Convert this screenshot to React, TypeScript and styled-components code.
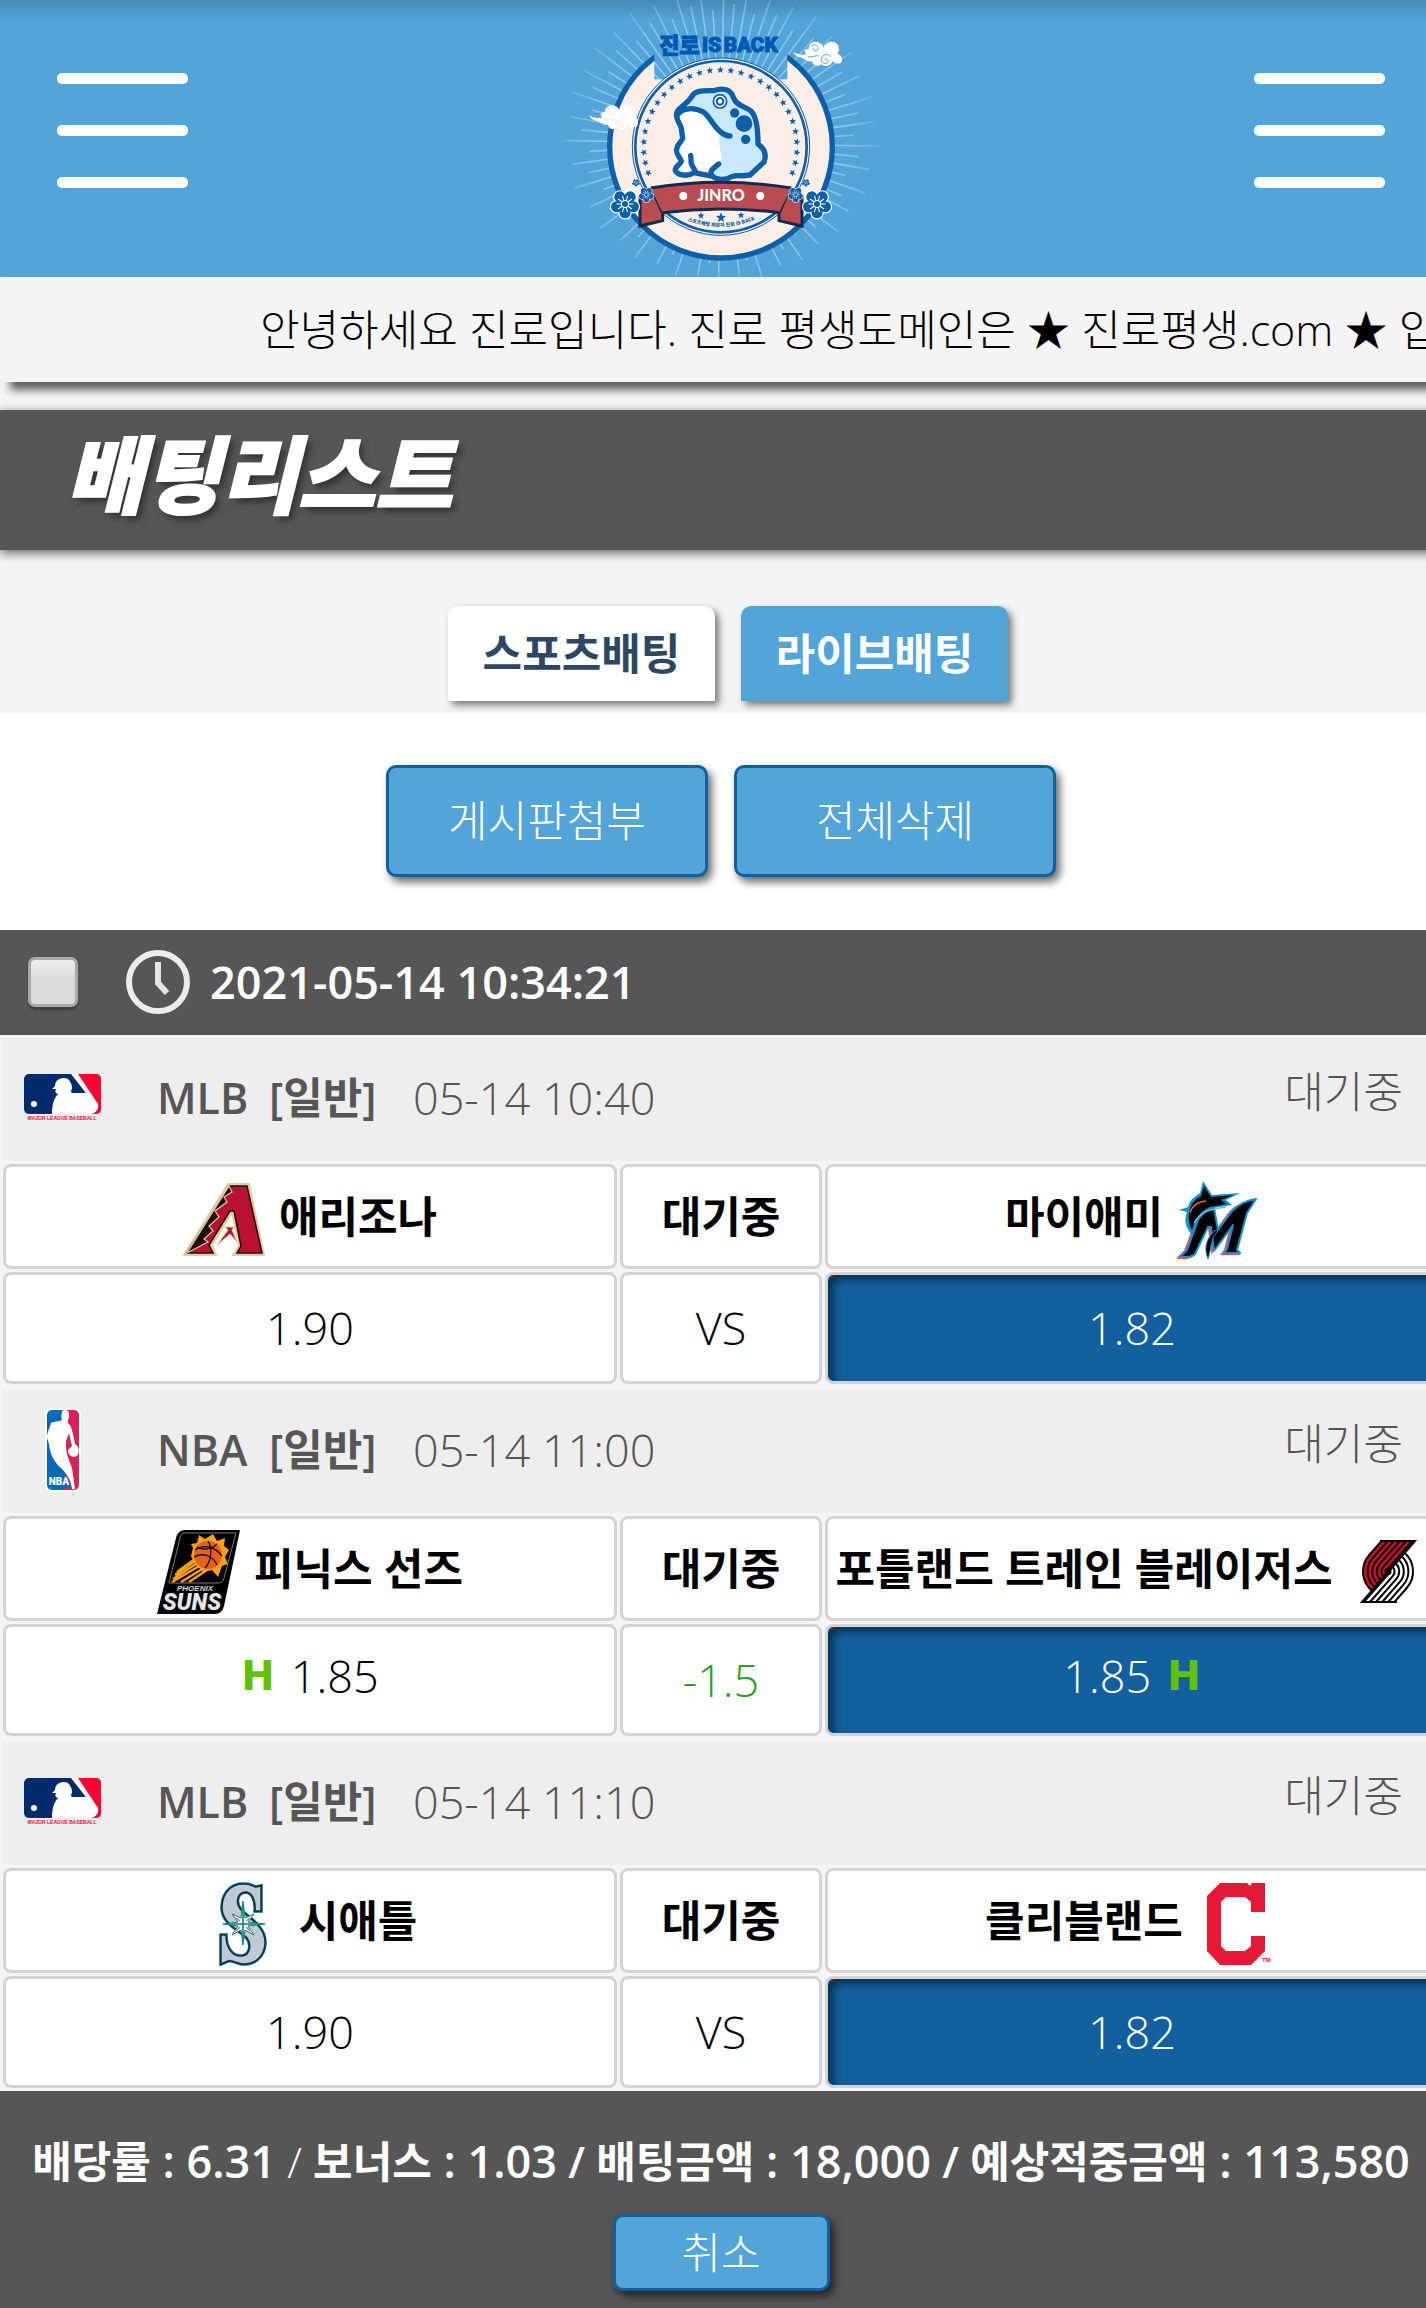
import React from "react";
import styled, { createGlobalStyle, css } from "styled-components";

const color = {
  sky: "#53a4d8",
  deep: "#13609e",
  dark: "#565656",
  pale: "#f4f4f4",
  row: "#eeeeee",
  line: "#d4d4d4",
  navy: "#2d4662",
  green: "#2a9f26",
  handicap: "#63bf0b",
};

const GlobalStyle = createGlobalStyle`
  *, *::before, *::after { box-sizing: border-box; }
  body {
    margin: 0;
    overflow-x: hidden;
    background: #fff;
    color: #000;
    font-family: "Open Sans", "DejaVu Sans", "Noto Sans CJK KR", sans-serif;
    font-size: 43px;
    font-weight: 300;
    line-height: 56px;
  }
  button, input { font: inherit; margin: 0; }
  button { cursor: pointer; }
`;

const Page = styled.div`
  width: calc(100% + 16px);
`;

/* ---------- header ---------- */

const Header = styled.header`
  display: flex;
  justify-content: space-between;
  align-items: flex-start;
  padding: 0 57px;
  background: linear-gradient(rgba(0, 0, 0, 0.16), rgba(0, 0, 0, 0) 20px) ${color.sky};
`;

const MenuButton = styled.button`
  display: flex;
  flex-direction: column;
  gap: 41px;
  width: 131px;
  margin-top: 73px;
  padding: 0;
  border: 0;
  background: none;
`;

const MenuBar = styled.span`
  height: 11px;
  border-radius: 5px;
  background: #fff;
`;

const LogoLink = styled.a`
  display: block;
  height: 277px;
`;

const Notice = styled.p`
  position: relative;
  margin: 0;
  padding: 25px 0 24px 260px;
  white-space: nowrap;
  background: ${color.pale};
  box-shadow: 10px 8px 8px rgba(0, 0, 0, 0.6);
`;

const NoticeText = styled.span`
  display: block;
  overflow: hidden;
`;

/* ---------- title and tabs ---------- */

const Listing = styled.section`
  padding-top: 28px;
  background: ${color.pale};
`;

const TitleBar = styled.div`
  padding: 20px 66px 30px;
  background: ${color.dark};
  box-shadow: 0 3px 10px rgba(0, 0, 0, 0.6);
`;

const Title = styled.h1`
  margin: 0;
  color: #fff;
  font-size: 84px;
  line-height: 90px;
  font-weight: 900;
  font-style: italic;
  -webkit-text-stroke: 2px #fff;
  text-shadow: 4px 5px 7px rgba(0, 0, 0, 0.45);
`;

const Tabs = styled.nav`
  display: flex;
  justify-content: center;
  gap: 26px;
  padding: 56px 0 12px 14px;
`;

const Tab = styled.button<{ $active?: boolean }>`
  width: 267px;
  height: 95px;
  padding: 0;
  border: 0;
  border-radius: 10px 10px 0 0;
  background: ${(p) => (p.$active ? color.sky : "#fff")};
  color: ${(p) => (p.$active ? "#fff" : color.navy)};
  font-weight: 600;
  box-shadow: 4px 4px 7px rgba(0, 0, 0, 0.5);
`;

const Actions = styled.div`
  display: flex;
  justify-content: center;
  gap: 26px;
  padding: 52px 0 53px;
  background: #fff;
`;

const ActionButton = styled.button<{ $small?: boolean }>`
  width: ${(p) => (p.$small ? 217 : 322)}px;
  height: ${(p) => (p.$small ? 77 : 112)}px;
  padding: 0;
  border: 3px solid ${color.deep};
  border-radius: 10px;
  background: ${color.sky};
  color: #fff;
  box-shadow: 4px 5px 9px rgba(0, 0, 0, 0.6);
`;

/* ---------- bet slip ---------- */

const SlipHead = styled.label`
  display: flex;
  align-items: center;
  height: 105px;
  padding: 0 28px 2px;
  background: ${color.dark};
  color: #fff;
  font-size: 45px;
  font-weight: 600;
`;

const Check = styled.input`
  appearance: none;
  width: 50px;
  height: 50px;
  margin-right: 47px;
  border: 3px solid #a9a9a9;
  border-radius: 7px;
  background: linear-gradient(#eeeeee, #dcdcdc 40%);
  box-shadow: 0 3px 2px rgba(0, 0, 0, 0.25);
`;

const Clock = styled.svg`
  width: 66px;
  height: 66px;
  margin-right: 19px;
`;

const MatchTable = styled.table`
  width: 100%;
  table-layout: fixed;
  border-collapse: separate;
  border-spacing: 3px;
  background: ${color.pale};
  text-align: center;
`;

const MiddleCol = styled.col`
  width: 202px;
`;

const LeagueCell = styled.th`
  height: 123px;
  padding: 0 0 4px;
  background: ${color.row};
  color: ${color.dark};
  font-weight: 300;
`;

const LeagueRow = styled.div`
  display: grid;
  grid-template-columns: 134px 112px 144px 1fr auto;
  align-items: center;
  padding: 0 36px 0 20px;
  text-align: left;
`;

const LeagueLogo = styled.div`
  display: flex;
  justify-content: center;
  width: 80px;
`;

const LeagueName = styled.b`
  font-weight: 600;
`;

const Kickoff = styled.time`
  font-size: 45px;
`;

const Status = styled.span`
  margin-bottom: 12px;
`;

const Cell = styled.td<{ $kind: "team" | "odds"; $picked?: boolean }>`
  height: ${(p) => (p.$kind === "team" ? 105 : 112)}px;
  padding: 0;
  border: 3px solid ${color.line};
  border-radius: 8px;
  background: #fff;
  ${(p) =>
    p.$kind === "team"
      ? css`
          font-weight: 600;
        `
      : css`
          font-size: 45px;
        `}
  ${(p) =>
    p.$picked &&
    css`
      background: ${color.deep};
      color: #fff;
      box-shadow: inset 5px 5px 8px rgba(0, 0, 0, 0.5);
    `}
`;

const Team = styled.div`
  display: flex;
  justify-content: center;
  align-items: center;
  gap: 14px;
  white-space: nowrap;

  svg {
    flex: none;
    margin-top: 6px;
  }
`;

const Odds = styled.div<{ $handicap?: boolean }>`
  display: flex;
  justify-content: center;
  align-items: center;
  gap: 16px;
  padding-bottom: ${(p) => (p.$handicap ? 8 : 0)}px;
`;

const HandicapMark = styled.span`
  color: ${color.handicap};
  font-family: "DejaVu Sans", sans-serif;
  font-size: 40px;
  font-weight: 700;
`;

const Line = styled.span`
  color: ${color.green};
`;

/* ---------- footer ---------- */

const Summary = styled.footer`
  display: flex;
  flex-direction: column;
  align-items: center;
  gap: 24px;
  padding: 42px 0 18px;
  background: ${color.dark};
  color: #fff;
`;

const Totals = styled.p`
  margin: 0;
  font-weight: 600;
  white-space: nowrap;
`;

const Amount = styled.span`
  font-size: 45px;
`;

const Thin = styled.span`
  font-weight: 300;
`;

/* ---------- brand logo ---------- */

const polar = (cx: number, cy: number, r: number, deg: number) => {
  const a = (deg * Math.PI) / 180;
  return [cx + r * Math.cos(a), cy + r * Math.sin(a)];
};

const starPoints = (cx: number, cy: number, r: number, turn = -90) =>
  Array.from({ length: 10 }, (_, i) =>
    polar(cx, cy, i % 2 ? r * 0.42 : r, turn + i * 36).join(",")
  ).join(" ");

const Flower = ({ x, y, r }: { x: number; y: number; r: number }) => (
  <g>
    {[0, 1].map((layer) =>
      Array.from({ length: 5 }, (_, i) => {
        const [px, py] = polar(x, y, r * 0.6, 90 + i * 72);
        return (
          <circle
            key={`${layer}${i}`}
            cx={px}
            cy={py}
            r={layer ? r * 0.38 : r * 0.46}
            fill={layer ? "#0e5fa8" : "#fff"}
          />
        );
      })
    )}
    <circle cx={x} cy={y} r={r * 0.5} fill="#0e5fa8" />
    {Array.from({ length: 10 }, (_, i) => {
      const [x1, y1] = polar(x, y, r * 0.26, i * 36);
      const [x2, y2] = polar(x, y, r * 0.58, i * 36);
      return <line key={i} x1={x1} y1={y1} x2={x2} y2={y2} stroke="#fff" strokeWidth={r * 0.07} />;
    })}
    <circle cx={x} cy={y} r={r * 0.24} fill="none" stroke="#fff" strokeWidth={r * 0.07} />
  </g>
);

const Cloud = ({ x, y, line }: { x: number; y: number; line: string }) => (
  <g transform={`translate(${x} ${y})`}>
    <path
      d="M0 30C8 40 24 42 40 38C30 32 34 22 46 22C46 8 62 -4 78 4C88 8 90 16 90 20C96 0 124 -6 134 12C140 22 136 34 132 38C146 40 150 56 142 66C134 68 122 66 118 60C112 76 92 78 84 68C78 76 58 76 56 60C40 62 30 50 20 48C10 46 2 40 0 30Z"
      fill="#fff"
    />
    <path
      d="M54 14C66 4 78 16 72 26C66 32 56 26 62 20M44 46C60 50 72 38 78 46M112 46C104 34 86 40 84 54C84 66 98 70 104 62C108 54 98 50 94 56"
      fill="none"
      stroke={line}
      strokeWidth="3"
    />
  </g>
);

const BrandLogo = () => (
  <svg width="330" height="277" viewBox="-12 0 990 831" role="img" aria-label="진로 IS BACK">
    <defs>
      <mask id="ringMask">
        <rect x="-12" y="0" width="990" height="831" fill="#fff" />
        <rect x="283" y="0" width="399" height="238" fill="#000" />
      </mask>
      <radialGradient id="rayFade" gradientUnits="userSpaceOnUse" cx="483" cy="430" r="490">
        <stop offset="0.4" stopColor="#fff" stopOpacity="0.5" />
        <stop offset="0.75" stopColor="#fff" stopOpacity="0.35" />
        <stop offset="1" stopColor="#fff" stopOpacity="0.1" />
      </radialGradient>
      <path id="sloganArc" d="M345 645Q483 718 622 641" />
    </defs>
    <g fill="url(#rayFade)">
      {Array.from({ length: 80 }, (_, i) => {
        const deg = i * 4.5 + 1;
        const down = Math.max(0, Math.sin((deg * Math.PI) / 180));
        const r = [476, 420, 462, 400][i % 4] - down * 60;
        const a = polar(483, 430, 200, deg - 0.5);
        const b = polar(483, 430, 200, deg + 0.5);
        const c = polar(483, 430, r, deg + 0.35);
        const d = polar(483, 430, r, deg - 0.35);
        return <polygon key={i} points={[a, b, c, d].map((p) => p.join(",")).join(" ")} />;
      })}
    </g>
    <circle cx="483" cy="440" r="334" fill="#fbeee6" stroke="#0e5fa8" strokeWidth="16" mask="url(#ringMask)" />
    <circle cx="483" cy="440" r="266" fill="#fbeee6" stroke="#0e5fa8" strokeWidth="3" />
    <circle cx="483" cy="440" r="257" fill="none" stroke="#0e5fa8" strokeWidth="8" />
    {Array.from({ length: 29 }, (_, i) => {
      const deg = -200 + i * (220 / 28);
      const [x, y] = polar(481, 440, 230, deg);
      return <polygon key={i} points={starPoints(x, y, 11, deg)} fill="#0a5cb4" />;
    })}

    <g fill="#0058b5" fontWeight="900" fontSize="62" fontFamily="Roboto, 'Noto Sans CJK KR', sans-serif" stroke="#0058b5" strokeWidth="3">
      <text x="298" y="158" fontSize="66">
        진로
      </text>
      <text x="426" y="156">
        IS
      </text>
      <text x="491" y="156">
        BACK
      </text>
    </g>

    <g strokeLinejoin="round" strokeLinecap="round">
      <path
        d="M350 350C345 325 375 320 395 290C405 270 430 272 460 272C490 262 512 268 520 292C530 320 560 320 575 335C592 355 594 400 594 432C620 450 618 470 612 486L570 525C540 530 530 524 515 530C495 540 480 540 460 532L440 522L402 522C385 530 355 528 348 512C346 498 362 490 362 484C360 470 348 462 350 448C352 430 364 425 366 415L364 385Z"
        fill="#c8e9fb"
      />
      <path
        d="M356 352C370 330 400 328 425 340C445 356 455 378 480 396C474 420 480 450 486 478C470 490 460 505 456 522L402 520C380 528 352 524 350 508C352 496 366 492 366 482C360 468 348 460 352 446C360 430 370 424 368 412L364 384Z"
        fill="#fff"
      />
      <path
        d="M350 350C345 325 375 320 395 290C405 270 430 272 460 272C490 262 512 268 520 292C530 320 560 320 575 335C592 355 594 400 594 432C620 450 618 470 612 486L570 525C540 530 530 524 515 530C495 542 470 540 456 528C446 512 462 504 476 492M456 528C440 526 425 522 402 518C385 530 355 528 346 512C344 498 362 494 364 484C360 470 346 462 350 448C352 430 366 425 368 415L364 385C360 370 352 365 350 350C360 326 395 318 430 336C450 350 460 380 482 396C492 405 500 408 510 408M392 466L394 492L406 514"
        fill="none"
        stroke="#0e5fa8"
        strokeWidth="16"
      />
    </g>
    <circle cx="480" cy="304" r="20" fill="#fff" stroke="#0e5fa8" strokeWidth="5" />
    <circle cx="480" cy="304" r="10" fill="#fff" stroke="#0e5fa8" strokeWidth="6" />
    <circle cx="524" cy="339" r="14" fill="#0e5fa8" />
    <circle cx="552" cy="371" r="25" fill="#0e5fa8" />
    <circle cx="557" cy="418" r="14" fill="#0e5fa8" />

    <path d="M240 590L275 566L308 640V662L240 678Z" fill="#b94c52" stroke="#15294a" strokeWidth="9" />
    <path d="M726 590L690 566L657 640V662L726 678Z" fill="#b94c52" stroke="#15294a" strokeWidth="9" />
    <path d="M272 564Q483 530 694 564L657 638Q483 616 308 638Z" fill="#b94c52" />
    <path d="M272 564Q483 530 694 564M308 638Q483 616 657 638" fill="none" stroke="#15294a" strokeWidth="9" />
    <circle cx="370" cy="588" r="12" fill="#fff" />
    <circle cx="601" cy="588" r="12" fill="#fff" />
    <text x="483" y="602" textAnchor="middle" fontSize="48" fontWeight="900" fontFamily="Lato, sans-serif" fill="#fff">
      JINRO
    </text>
    <polygon points={starPoints(423, 647, 11)} fill="#0a5cb4" />
    <polygon points={starPoints(483, 653, 16)} fill="#0a5cb4" />
    <polygon points={starPoints(543, 646, 11)} fill="#0a5cb4" />
    <text fontSize="15" fontWeight="900" fontFamily="'Noto Sans CJK KR', sans-serif" fill="#0e5fa8">
      <textPath href="#sloganArc" startOffset="50%" textAnchor="middle">
        스포츠배팅 최강자 진로 IS BACK
      </textPath>
    </text>

    <Flower x={195} y={612} r={44} />
    <Flower x={771} y={612} r={44} />
    <Flower x={259} y={584} r={23} />
    <Flower x={707} y={584} r={23} />
    <Flower x={228} y={548} r={12} />
    <Flower x={738} y={548} r={12} />
    <Cloud x={700} y={124} line={color.sky} />
    <Cloud x={88} y={314} line="#fbe3d6" />
  </svg>
);

/* ---------- league and team logos ---------- */

const MlbLogo = () => (
  <svg width="78" height="48" viewBox="0 0 78 48" role="img" aria-label="MLB">
    <rect width="77" height="40" rx="5" fill="#002b6b" />
    <path d="M52 0H72A5 5 0 0 1 77 5V35A5 5 0 0 1 72 40H60V10Z" fill="#fb0633" />
    <path
      d="M47 0H54L74 30C75 35 72 39 67 40H28C28 33 29 25 34 20C31 19 31 17 32 15L28 15L31 12C31 6 36 4 40 4C45 4 48 9 48 14C48 16 46 17 48 19H62L58 14Z"
      fill="#fff"
    />
    <circle cx="10" cy="30" r="3" fill="#fff" />
    <text x="38" y="46" textAnchor="middle" fontSize="5" fontWeight="700" fontFamily="'Liberation Sans', sans-serif" fill="#fb0633">
      MAJOR LEAGUE BASEBALL
    </text>
  </svg>
);

const NbaLogo = () => (
  <svg width="36" height="84" viewBox="0 0 36 84" role="img" aria-label="NBA">
    <rect width="36" height="84" rx="6" fill="#fff" />
    <path d="M7 2H19V82H7A5 5 0 0 1 2 77V7A5 5 0 0 1 7 2Z" fill="#0a6ab8" />
    <path d="M19 2H29A5 5 0 0 1 34 7V77A5 5 0 0 1 29 82H19Z" fill="#d92157" />
    <path d="M17 60L28 80H17Z" fill="#0a6ab8" />
    <path
      d="M18 2C22 1 25 4 24 8C24 11 22 13 23 15C26 17 27 22 28 26L30 36C34 38 35 44 32 48C28 50 23 48 23 42L27 38L24 25L21 33C20 44 24 52 27 60L30 81H27C26 72 22 66 16 60C9 54 5 46 4 36L2 30C2 24 5 20 6 15C9 13 14 14 17 12C16 9 16 5 18 2Z"
      fill="#fff"
    />
    <text x="14" y="77" textAnchor="middle" fontSize="10" fontWeight="900" fontFamily="Roboto, sans-serif" fill="#fff">
      NBA
    </text>
  </svg>
);

const ArizonaLogo = () => (
  <svg width="82" height="84" viewBox="0 -6 82 84" aria-hidden="true">
    <path d="M45 0H66L81 71H50L56 62L49 28L29 61L33 71H1Z" fill="#e0cda2" stroke="#e0cda2" strokeWidth="2" />
    <path d="M47 2H64L79 69H54L58 62L51 27H47L26 61L30 69H4Z" fill="#ba1031" stroke="#200c0d" strokeWidth="1.5" />
    <path d="M46 2L49 8L41 13L44 18L32 27L36 33L26 42L30 47L21 55L25 58L4 69Z" fill="#200c0d" stroke="#e0cda2" strokeWidth="1.2" />
    <path d="M42 43H51L49 46L54 58L47 50L34 61L45 46Z" fill="#ba1031" stroke="#e0cda2" strokeWidth="1" />
  </svg>
);

const MarlinsLogo = () => {
  const m =
    "M2 76L9 69L20 39Q26 29 36 27L40 49L54 30Q64 20 78 18L69 32L59 69L62 72H46L49 68L55 44L36 70L33 46H30L17 73Q14 76 10 76Z";
  return (
    <svg width="82" height="84" viewBox="-1 -3 82 84" aria-hidden="true">
      <path d={m} fill="#ef5360" stroke="#ef5360" strokeWidth="2" transform="translate(-2 1)" />
      <path
        d="M25 0L34 14L62 12L48 19L54 24L36 27C24 30 18 40 14 54C7 46 6 38 9 31L1 29L10 26C12 18 18 15 22 12Z"
        fill="#0a95cf"
      />
      <path
        d="M26 5L33 16L56 14L43 19L49 23L32 26C22 30 17 38 14 49C10 42 10 34 12 28C14 21 18 18 23 15Z"
        fill="#000"
      />
      <path d={m} fill="#000" stroke="#0a95cf" strokeWidth="2" strokeLinejoin="round" />
      <path d="M12 32C14 24 20 21 28 20" fill="none" stroke="#ef5360" strokeWidth="1.5" />
      <path d="M16 42C22 31 32 28 48 26" fill="none" stroke="#8fb4c4" strokeWidth="1.5" />
      <path d="M38 49C29 56 25 66 30 78C34 66 32 58 40 50Z" fill="#000" stroke="#0a95cf" strokeWidth="1" />
    </svg>
  );
};

const SunsLogo = () => (
  <svg width="83" height="84" viewBox="0 0 83 84" aria-hidden="true">
    <path d="M28 0H83L67 76Q65 84 58 84H0L19 8Q21 0 28 0Z" fill="#000" />
    <path d="M28 3H79L67 48Q66 53 61 53H12L23 8Q24 3 28 3Z" fill="none" stroke="#77797d" strokeWidth="1" />
    <g stroke="#f9a01b" strokeWidth="2.4">
      <path d="M42 26L20 42M41 29L18 45M42 32L16 49M44 35L15 52M47 38L24 52M50 40L32 52" />
    </g>
    <polygon
      points="42,5 48,9 56,4 60,11 68,8 67,16 72,20 68,27 71,34 65,36 61,47 55,40 46,42 38,34 34,26 36,18 34,14 40,13"
      fill="#f9a01b"
    />
    <circle cx="51" cy="25" r="14" fill="#e56020" />
    <path d="M51 11C56 18 54 32 48 38M38 20C46 14 58 16 65 26M37 27C46 22 56 26 60 35M60 14C54 20 44 20 40 17" fill="none" stroke="#200c0d" strokeWidth="1.3" />
    <text x="38" y="61" textAnchor="middle" fontSize="8" fontWeight="700" fontStyle="italic" fontFamily="'Liberation Sans', sans-serif" fill="#d6d8db">
      PHOENIX
    </text>
    <text x="35" y="80" textAnchor="middle" fontSize="23" fontWeight="900" fontStyle="italic" fontFamily="Roboto, sans-serif" fill="#e4e5e7">
      SUNS
    </text>
  </svg>
);

/* Half of the pinwheel: parallel stripes that bend round the hub. */
const pinwheelStripe = (r: number) => {
  const cx = 26;
  const cy = 30.5;
  const tx = cx - 0.75 * r;
  const ty = cy - 0.66 * r;
  const topX = tx + (0.66 * ty) / 0.75;
  return `M${topX} 0L${tx} ${ty}A${r} ${r} 0 0 0 ${cx - 0.64 * r} ${cy + 0.77 * r}`;
};

const BlazersLogo = () => {
  const stripes = [25, 20.4, 15.8, 11.2, 6.6, 2].map(pinwheelStripe).join("");
  return (
    <svg width="82" height="84" viewBox="-15 -11 82 84" aria-hidden="true">
      <path d={`${pinwheelStripe(25)}L26 30.5L52 0Z`} fill="#c8102e" />
      <g fill="none" stroke="#000" strokeWidth="2">
        <path d={stripes} />
        <path d={stripes} transform="rotate(180 26 30.5)" />
        <path d="M18 0H53L27 30M35 61H0L26 31" />
      </g>
      <circle cx="26" cy="30.5" r="3.5" fill="#000" />
    </svg>
  );
};

const MarinersLogo = () => {
  const s =
    "M41 3V28H35C36 17 32 9 25 9C17 10 15 20 21 27C30 36 46 44 45 61C44 74 34 82 22 81C16 80 12 77 8 78L1 81V52H6C6 66 13 74 22 73C30 72 32 62 27 55C18 46 1 40 2 23C3 8 13 0 25 1C31 1 34 4 36 4Z";
  return (
    <svg width="82" height="84" viewBox="-17 -1 82 84" aria-hidden="true">
      <path d={s} fill="#c1c9d2" stroke="#00685e" strokeWidth="3.5" />
      <path d={s} fill="#c1c9d2" stroke="#0c2c56" strokeWidth="1.5" />
      <polygon points="23,18 25,35 34,31 28,39 45,41 28,43 34,52 25,47 23,62 21,47 12,52 18,43 3,41 18,39 12,31 21,35" fill="#fff" stroke="#0a8078" strokeWidth="1" />
      <path d="M16 35L20 38M30 35L26 38M16 48L20 44M30 48L26 44" stroke="#e46a76" strokeWidth="1.5" />
      <path d="M23 22V58M6 41H42" stroke="#0a8078" strokeWidth="1.6" />
    </svg>
  );
};

const ClevelandLogo = () => (
  <svg width="82" height="84" viewBox="-10 -1 82 84" aria-hidden="true">
    <path
      d="M0 13L13 0H40L43 3L45 0H58V29H44V19L38 14H19L14 19V63L19 68H38L44 63V53H58V68L44 82H13L0 68Z"
      fill="#e51937"
    />
    <text x="55" y="79" fontSize="6" fontWeight="700" fontFamily="'Liberation Sans', sans-serif" fill="#e51937">
      TM
    </text>
  </svg>
);

/* ---------- data ---------- */

type Match = {
  id: string;
  league: "MLB" | "NBA";
  time: string;
  home: string;
  away: string;
  homeLogo: React.ReactNode;
  awayLogo: React.ReactNode;
  homeOdds: string;
  awayOdds: string;
  line?: string;
};

const matches: Match[] = [
  {
    id: "ari-mia",
    league: "MLB",
    time: "05-14 10:40",
    home: "애리조나",
    away: "마이애미",
    homeLogo: <ArizonaLogo />,
    awayLogo: <MarlinsLogo />,
    homeOdds: "1.90",
    awayOdds: "1.82",
  },
  {
    id: "phx-por",
    league: "NBA",
    time: "05-14 11:00",
    home: "피닉스 선즈",
    away: "포틀랜드 트레인 블레이저스",
    homeLogo: <SunsLogo />,
    awayLogo: <BlazersLogo />,
    homeOdds: "1.85",
    awayOdds: "1.85",
    line: "-1.5",
  },
  {
    id: "sea-cle",
    league: "MLB",
    time: "05-14 11:10",
    home: "시애틀",
    away: "클리블랜드",
    homeLogo: <MarinersLogo />,
    awayLogo: <ClevelandLogo />,
    homeOdds: "1.90",
    awayOdds: "1.82",
  },
];

const totals = [
  { label: "배당률", value: "6.31" },
  { label: "보너스", value: "1.03" },
  { label: "배팅금액", value: "18,000" },
  { label: "예상적중금액", value: "113,580" },
];

const Hamburger = ({ label }: { label: string }) => (
  <MenuButton type="button" aria-label={label}>
    <MenuBar />
    <MenuBar />
    <MenuBar />
  </MenuButton>
);

const MatchBlock = ({ match }: { match: Match }) => (
  <MatchTable>
    <colgroup>
      <col />
      <MiddleCol />
      <col />
    </colgroup>
    <tbody>
      <tr>
        <LeagueCell colSpan={3} scope="colgroup">
          <LeagueRow>
            <LeagueLogo>{match.league === "MLB" ? <MlbLogo /> : <NbaLogo />}</LeagueLogo>
            <LeagueName>{match.league}</LeagueName>
            <LeagueName>[일반]</LeagueName>
            <Kickoff>{match.time}</Kickoff>
            <Status>대기중</Status>
          </LeagueRow>
        </LeagueCell>
      </tr>
      <tr>
        <Cell $kind="team">
          <Team>
            {match.homeLogo}
            {match.home}
          </Team>
        </Cell>
        <Cell $kind="team">대기중</Cell>
        <Cell $kind="team">
          <Team>
            {match.away}
            {match.awayLogo}
          </Team>
        </Cell>
      </tr>
      <tr>
        <Cell $kind="odds">
          <Odds $handicap={!!match.line}>
            {match.line && <HandicapMark>H</HandicapMark>}
            {match.homeOdds}
          </Odds>
        </Cell>
        <Cell $kind="odds">{match.line ? <Line>{match.line}</Line> : "VS"}</Cell>
        <Cell $kind="odds" $picked>
          <Odds $handicap={!!match.line}>
            {match.awayOdds}
            {match.line && <HandicapMark>H</HandicapMark>}
          </Odds>
        </Cell>
      </tr>
    </tbody>
  </MatchTable>
);

export default function App() {
  return (
    <>
      <GlobalStyle />
      <Page>
        <Header>
          <Hamburger label="왼쪽 메뉴" />
          <LogoLink href="#home">
            <BrandLogo />
          </LogoLink>
          <Hamburger label="오른쪽 메뉴" />
        </Header>
        <Notice>
          <NoticeText>안녕하세요 진로입니다. 진로 평생도메인은 ★ 진로평생.com ★ 입니다.</NoticeText>
        </Notice>
        <Listing>
          <TitleBar>
            <Title>배팅리스트</Title>
          </TitleBar>
          <Tabs>
            <Tab type="button">스포츠배팅</Tab>
            <Tab type="button" $active>
              라이브배팅
            </Tab>
          </Tabs>
        </Listing>
        <Actions>
          <ActionButton type="button">게시판첨부</ActionButton>
          <ActionButton type="button">전체삭제</ActionButton>
        </Actions>
        <main>
          <SlipHead>
            <Check type="checkbox" />
            <Clock viewBox="0 0 66 66" aria-hidden="true">
              <circle cx="33" cy="33" r="29" fill="none" stroke="#ececec" strokeWidth="6" />
              <path d="M33 13V34L42 44" fill="none" stroke="#e4e4e4" strokeWidth="6" />
            </Clock>
            2021-05-14 10:34:21
          </SlipHead>
          {matches.map((match) => (
            <MatchBlock key={match.id} match={match} />
          ))}
        </main>
        <Summary>
          <Totals>
            {totals.map((t, i) => (
              <React.Fragment key={t.label}>
                {i === 1 && <Thin> / </Thin>}
                {i > 1 && " / "}
                {t.label}
                <Amount> : {t.value}</Amount>
              </React.Fragment>
            ))}
          </Totals>
          <ActionButton type="button" $small>
            취소
          </ActionButton>
        </Summary>
      </Page>
    </>
  );
}
